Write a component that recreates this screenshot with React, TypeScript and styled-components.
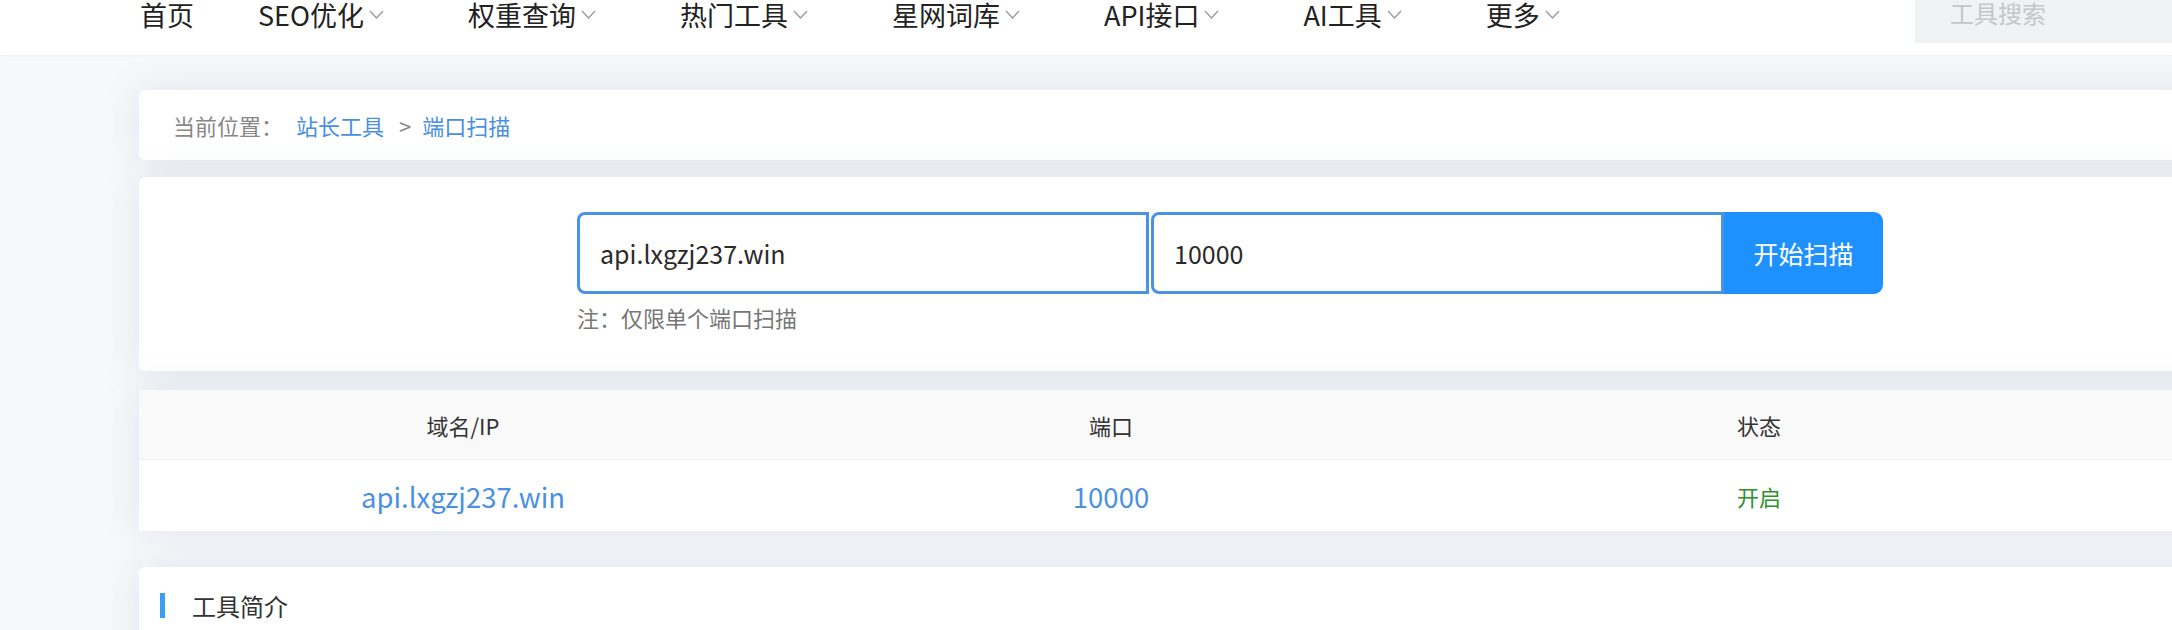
import React from 'react';
import styled, { createGlobalStyle } from 'styled-components';

const GlobalStyle = createGlobalStyle`
  html, body {
    margin: 0;
    padding: 0;
    background: #f6f8fa;
    overflow: hidden;
  }

  body {
    font-family: "Noto Sans CJK SC", "Noto Sans", sans-serif;
    color: #333;
  }
`;

const Header = styled.header`
  height: 55px;
  background: #fff;
  display: flex;
  align-items: flex-start;
  padding-left: 140px;
  box-shadow: 0 1px 2px rgba(0, 0, 0, 0.04);
  position: relative;
  z-index: 1;
`;

const Nav = styled.nav`
  display: flex;
  align-items: center;
  height: 28px;
`;

const NavItem = styled.a`
  display: flex;
  align-items: center;
  margin-right: 64px;
  font-size: 27px;
  line-height: 27px;
  color: #222;
  text-decoration: none;
  white-space: nowrap;
`;

const Chevron = styled.svg`
  width: 15px;
  height: 9px;
  margin: 0 20px 0 5px;
`;

const SearchBox = styled.div`
  margin-left: auto;
  width: 257px;
  height: 43px;
  background: #f0f3f6;
  display: flex;
  align-items: flex-start;
  padding-left: 35px;
  box-sizing: border-box;
  font-size: 24px;
  line-height: 26px;
  color: #c4c6c8;
`;

const Main = styled.main`
  padding: 35px 0 0 139px;
`;

const Column = styled.div`
  width: 2182px;
  display: flex;
  flex-direction: column;
`;

const Card = styled.section<{ $top?: number }>`
  background: #fff;
  border-radius: 6px;
  margin-top: ${({ $top }) => $top ?? 0}px;
  box-shadow: 0 0 36px rgba(110, 135, 165, 0.16);
  overflow: hidden;
`;

const Breadcrumb = styled(Card)`
  height: 70px;
  display: flex;
  align-items: center;
  padding-left: 34px;
  font-size: 22px;
`;

const CrumbLabel = styled.span`
  color: #888;
  margin-right: 13px;
`;

const CrumbLink = styled.a`
  color: #4a8fe2;
  text-decoration: none;
`;

const CrumbSep = styled.span`
  color: #888;
  margin: 0 11px 0 15px;
`;

const FormCard = styled(Card)`
  height: 194px;
  display: flex;
  justify-content: center;
  padding-top: 35px;
  box-sizing: border-box;
`;

const FormBlock = styled.div`
  display: flex;
  flex-direction: column;
`;

const InputRow = styled.div`
  display: flex;
  gap: 2px;
`;

const TextInput = styled.input<{ $width: number }>`
  width: ${({ $width }) => $width}px;
  height: 82px;
  box-sizing: border-box;
  border: 3px solid #4a92e3;
  border-radius: 8px 0 0 8px;
  padding: 0 0 0 20px;
  font-family: inherit;
  font-size: 25px;
  color: #2a2a2a;
  outline: none;
`;

const ScanButton = styled.button`
  width: 159px;
  height: 82px;
  margin-left: -2px;
  border: none;
  border-radius: 0 9px 9px 0;
  background: #1e90ff;
  color: #fff;
  font-family: inherit;
  font-size: 25px;
  cursor: pointer;
`;

const Note = styled.div`
  margin-top: 6px;
  font-size: 22px;
  line-height: 34px;
  color: #777;
`;

const TableCard = styled(Card)`
  border-radius: 2px;
`;

const Row = styled.div<{ $head?: boolean }>`
  display: grid;
  grid-template-columns: repeat(3, 648px);
  height: ${({ $head }) => ($head ? 69 : 71)}px;
  align-items: center;
  background: ${({ $head }) => ($head ? '#f9f9f9' : '#fff')};
  border-bottom: ${({ $head }) => ($head ? '1px solid #eee' : 'none')};
`;

const HeadCell = styled.div`
  text-align: center;
  font-size: 22px;
  color: #333;
`;

const Cell = styled.div<{ $tone: 'link' | 'ok' }>`
  text-align: center;
  font-size: ${({ $tone }) => ($tone === 'link' ? 27.5 : 22)}px;
  color: ${({ $tone }) => ($tone === 'link' ? '#4a90e2' : '#2d912d')};
`;

const IntroCard = styled(Card)`
  height: 140px;
  padding: 26px 0 0 21px;
  box-sizing: border-box;
`;

const SectionTitle = styled.h2`
  margin: 0;
  display: flex;
  align-items: center;
  font-size: 24px;
  font-weight: normal;
  line-height: 25px;
  color: #333;

  &::before {
    content: '';
    width: 5px;
    height: 25px;
    background: #3a9ff2;
    margin-right: 27px;
  }
`;

const navItems: { label: string; arrow: boolean }[] = [
  { label: '首页', arrow: false },
  { label: 'SEO优化', arrow: true },
  { label: '权重查询', arrow: true },
  { label: '热门工具', arrow: true },
  { label: '星网词库', arrow: true },
  { label: 'API接口', arrow: true },
  { label: 'AI工具', arrow: true },
  { label: '更多', arrow: true },
];

const ArrowDown: React.FC = () => (
  <Chevron viewBox="0 0 15 9" fill="none">
    <polyline points="1,1 7.5,8 14,1" stroke="#999" strokeWidth="1.3" />
  </Chevron>
);

const App: React.FC = () => {
  return (
    <>
      <GlobalStyle />
      <Header>
        <Nav>
          {navItems.map((item) => (
            <NavItem key={item.label}>
              {item.label}
              {item.arrow && <ArrowDown />}
            </NavItem>
          ))}
        </Nav>
        <SearchBox>工具搜索</SearchBox>
      </Header>
      <Main>
        <Column>
          <Breadcrumb>
            <CrumbLabel>当前位置：</CrumbLabel>
            <CrumbLink>站长工具</CrumbLink>
            <CrumbSep>&gt;</CrumbSep>
            <CrumbLink>端口扫描</CrumbLink>
          </Breadcrumb>
          <FormCard $top={17}>
            <FormBlock>
              <InputRow>
                <TextInput $width={572} defaultValue="api.lxgzj237.win" />
                <TextInput $width={573} defaultValue="10000" />
                <ScanButton>开始扫描</ScanButton>
              </InputRow>
              <Note>注：仅限单个端口扫描</Note>
            </FormBlock>
          </FormCard>
          <TableCard $top={19}>
            <Row $head>
              <HeadCell>域名/IP</HeadCell>
              <HeadCell>端口</HeadCell>
              <HeadCell>状态</HeadCell>
            </Row>
            <Row>
              <Cell $tone="link">api.lxgzj237.win</Cell>
              <Cell $tone="link">10000</Cell>
              <Cell $tone="ok">开启</Cell>
            </Row>
          </TableCard>
          <IntroCard $top={36}>
            <SectionTitle>工具简介</SectionTitle>
          </IntroCard>
        </Column>
      </Main>
    </>
  );
};

export default App;
